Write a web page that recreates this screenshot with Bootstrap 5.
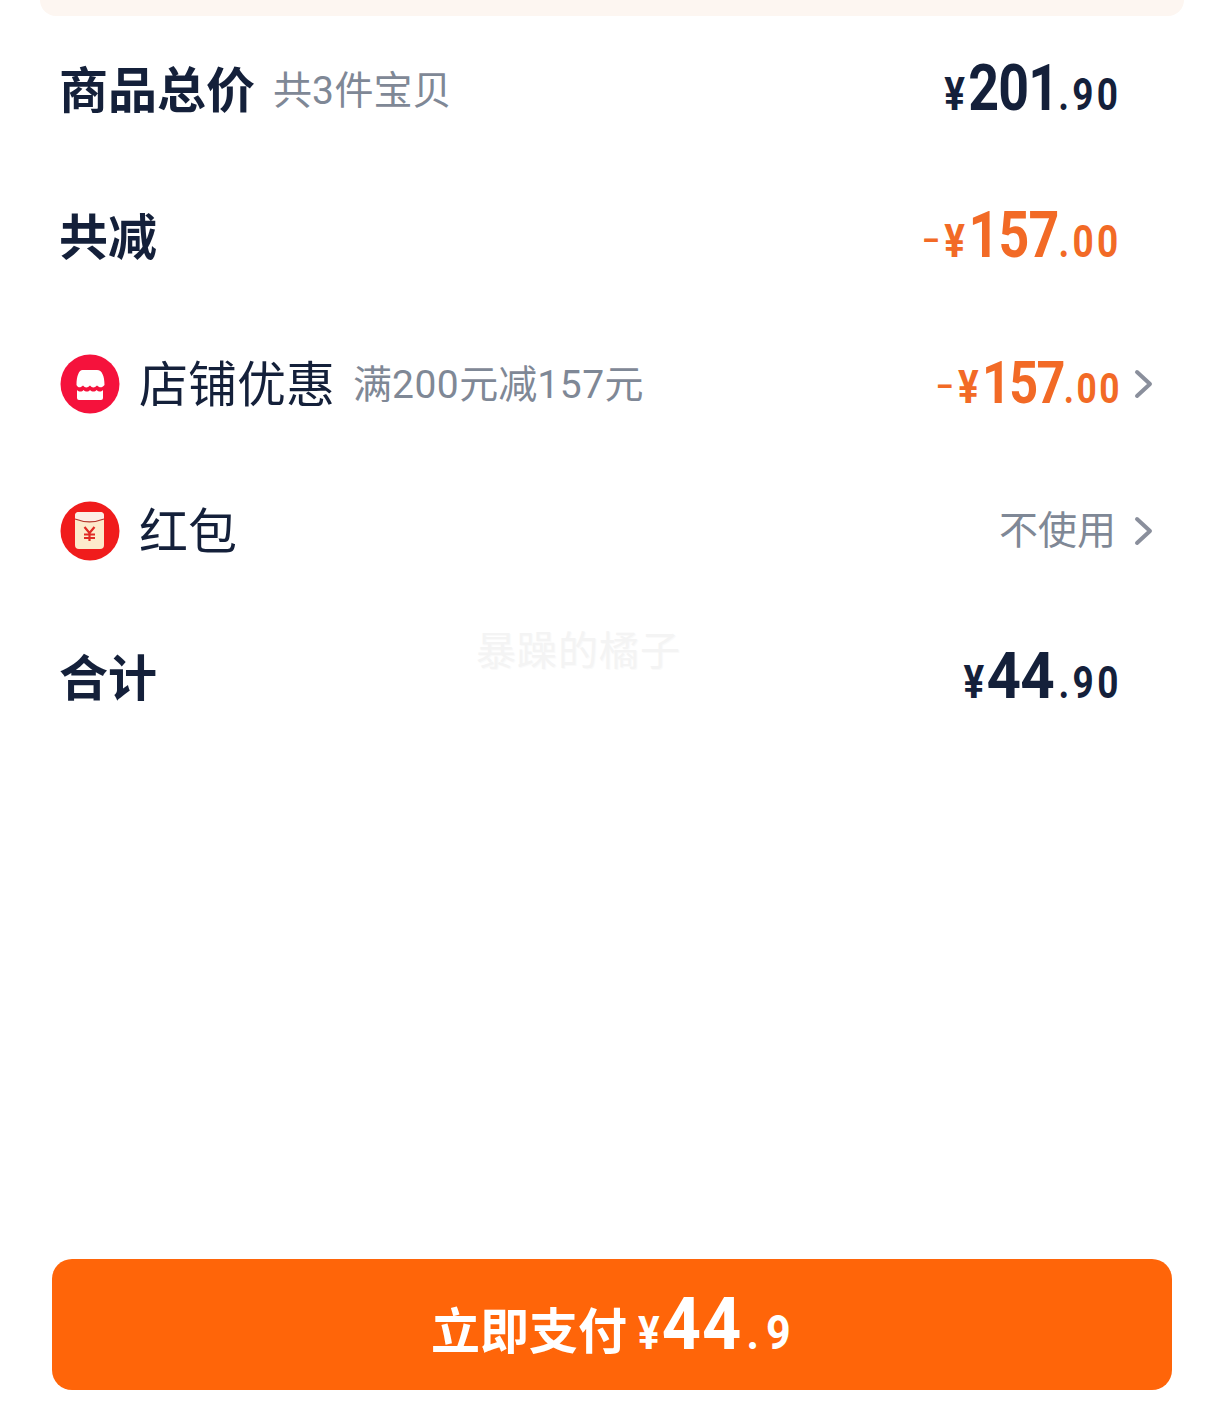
<!DOCTYPE html>
<html lang="zh">
<head>
  <meta charset="UTF-8">
  <title>订单确认</title>
  <link href="https://cdn.jsdelivr.net/npm/bootstrap@5.3.1/dist/css/bootstrap.min.css" rel="stylesheet">
  <style>
    body { font-family: "Liberation Sans", "Noto Sans CJK SC", sans-serif; color: #14203a; background: #fff; }
    .page-wrap { width: 1224px; height: 1401px; overflow: hidden; }
    .top-band { height: 16px; margin: 0 40px; background: #fdf6f1; border-radius: 0 0 16px 16px; }
    .fee-row { height: 147px; padding-left: 60px; padding-right: 106px; }
    .fee-row.has-arrow { padding-right: 70px; }
    .fee-label { font-size: 49px; line-height: 1; padding-top: 3px; margin-left: -1px; }
    .fee-label.is-strong { font-weight: 700; }
    .fee-note { font-size: 39px; line-height: 1; color: #7f8896; margin-left: 18px; padding-top: 3px; }
    .fee-note-num { font-family: "Roboto", "Noto Sans CJK SC", sans-serif; letter-spacing: .5px; }
    .round-icon { width: 60px; height: 60px; margin-right: 20px; flex: none; }
    .price { font-family: "Roboto", sans-serif; font-weight: 700; line-height: 1; white-space: nowrap; display: flex; align-items: baseline; transform: scaleX(.84); transform-origin: right center; margin-top: -2px; }
    .price-sign { font-size: 46px; margin-right: 4px; }
    .price-dash { font-size: 32px; margin-right: 6px; position: relative; top: -6px; }
    .price-big { font-size: 64px; letter-spacing: -1px; }
    .price-small { font-size: 44px; letter-spacing: 4px; margin-right: -4px; }
    .price-mid .price-big { font-size: 60px; letter-spacing: -2px; }
    .price-mid .price-small { font-size: 42px; letter-spacing: 3px; margin-right: -3px; }
    .price-wide .price-sign { margin-right: 11px; }
    .price-wide .price-big { display: inline-block; margin-right: 6px; transform: scaleX(1.12); transform-origin: right center; }
    .price-orange { color: #f26a26; }
    .go-arrow { width: 20px; height: 30px; margin-left: 15px; flex: none; }
    .skip-text { font-size: 39px; line-height: 1; color: #7f8896; margin-right: 3px; }
    .pay-btn { display: flex; width: 1120px; height: 131px; margin: 508px 0 0 52px; background: #ff6509; border: 0; border-radius: 20px; color: #fff; }
    .pay-btn:hover, .pay-btn:active { background: #ff6509 !important; color: #fff !important; }
    .pay-text { font-size: 49px; font-weight: 700; line-height: 1; }
    .pay-price { font-family: "Roboto", sans-serif; font-weight: 700; line-height: 1; display: flex; align-items: baseline; margin-left: 11px; width: 155px; transform: scaleX(.88); transform-origin: left center; }
    .pay-sign { font-size: 46px; margin-right: 2px; }
    .pay-big { display: inline-block; font-size: 72px; letter-spacing: 1px; transform: scaleX(1.08); transform-origin: left center; }
    .pay-small { font-size: 49px; letter-spacing: 8px; margin-left: 12px; }
    .water-mark { position: absolute; left: 476px; top: 631px; font-size: 40px; line-height: 1; letter-spacing: 1px; color: #f4f4f4; text-shadow: 1px 1px 0 #fafafa; }
  </style>
</head>
<body>
  <div class="page-wrap position-relative">
    <div class="top-band"></div>

    <div class="fee-row d-flex align-items-center justify-content-between">
      <div class="d-flex align-items-center">
        <span class="fee-label is-strong">商品总价</span>
        <span class="fee-note">共<span class="fee-note-num">3</span>件宝贝</span>
      </div>
      <div class="price">
        <span class="price-sign">¥</span><span class="price-big">201</span><span class="price-small">.90</span>
      </div>
    </div>

    <div class="fee-row d-flex align-items-center justify-content-between">
      <span class="fee-label is-strong">共减</span>
      <div class="price price-orange">
        <span class="price-dash">–</span><span class="price-sign">¥</span><span class="price-big">157</span><span class="price-small">.00</span>
      </div>
    </div>

    <div class="fee-row has-arrow d-flex align-items-center justify-content-between">
      <div class="d-flex align-items-center">
        <svg class="round-icon" viewBox="0 0 60 60">
          <circle cx="30" cy="30" r="29.5" fill="#f5123c"/>
          <path d="M22.500 16h14.500c5 0 7.500 6 7.500 15-2.500 3-5 3-7.500 .5-2.500 2.500-5 2.500-7 0-2.500 2.500-5 2.500-7 0-2.500 2.500-5 2.500-6.500-.5 0-9 2.500-15 6-15z" fill="#fff"/>
          <path d="M17 36c2 2 5 2 6.500 0 2 2 5 2 6.500 0 2 2 5 2 6.500 0 2 2 4.500 2 6.500 0v8a2 2 0 0 1-2 2H19a2 2 0 0 1-2-2z" fill="#fff"/>
        </svg>
        <span class="fee-label">店铺优惠</span>
        <span class="fee-note">满<span class="fee-note-num">200</span>元减<span class="fee-note-num">157</span>元</span>
      </div>
      <div class="d-flex align-items-center">
        <div class="price price-mid price-orange">
          <span class="price-dash">–</span><span class="price-sign">¥</span><span class="price-big">157</span><span class="price-small">.00</span>
        </div>
        <svg class="go-arrow" viewBox="0 0 20 30"><path d="M3 3l13 12L3 27" fill="none" stroke="#8a8f9c" stroke-width="4" stroke-linecap="round" stroke-linejoin="round"/></svg>
      </div>
    </div>

    <div class="fee-row has-arrow d-flex align-items-center justify-content-between">
      <div class="d-flex align-items-center">
        <svg class="round-icon" viewBox="0 0 60 60">
          <circle cx="30" cy="30" r="29.5" fill="#f01c1c"/>
          <rect x="15" y="11" width="29" height="37" rx="4" fill="#fdeacb"/>
          <path d="M15 15a4 4 0 0 1 4-4h21a4 4 0 0 1 4 4v3c-9 3.500-20 3.500-29 0z" fill="#fdeee6"/>
          <path d="M15 18c9 3.500 20 3.500 29 0" fill="none" stroke="#b5352a" stroke-width="1.200"/>
          <path d="M24.500 26l5 6 5-6M29.500 32v8M24 33.500h11M24 37h11" fill="none" stroke="#e02a24" stroke-width="2.200"/>
        </svg>
        <span class="fee-label">红包</span>
      </div>
      <div class="d-flex align-items-center">
        <span class="skip-text">不使用</span>
        <svg class="go-arrow" viewBox="0 0 20 30"><path d="M3 3l13 12L3 27" fill="none" stroke="#8a8f9c" stroke-width="4" stroke-linecap="round" stroke-linejoin="round"/></svg>
      </div>
    </div>

    <div class="fee-row d-flex align-items-center justify-content-between">
      <span class="fee-label is-strong">合计</span>
      <div class="price price-wide">
        <span class="price-sign">¥</span><span class="price-big">44</span><span class="price-small">.90</span>
      </div>
    </div>

    <div class="water-mark">暴躁的橘子</div>

    <button type="button" class="btn pay-btn align-items-center justify-content-center p-0">
      <span class="d-flex align-items-baseline">
        <span class="pay-text">立即支付</span>
        <span class="pay-price"><span class="pay-sign">¥</span><span class="pay-big">44</span><span class="pay-small">.9</span></span>
      </span>
    </button>
  </div>
  <script src="https://cdn.jsdelivr.net/npm/bootstrap@5.3.1/dist/js/bootstrap.bundle.min.js"></script>
</body>
</html>
